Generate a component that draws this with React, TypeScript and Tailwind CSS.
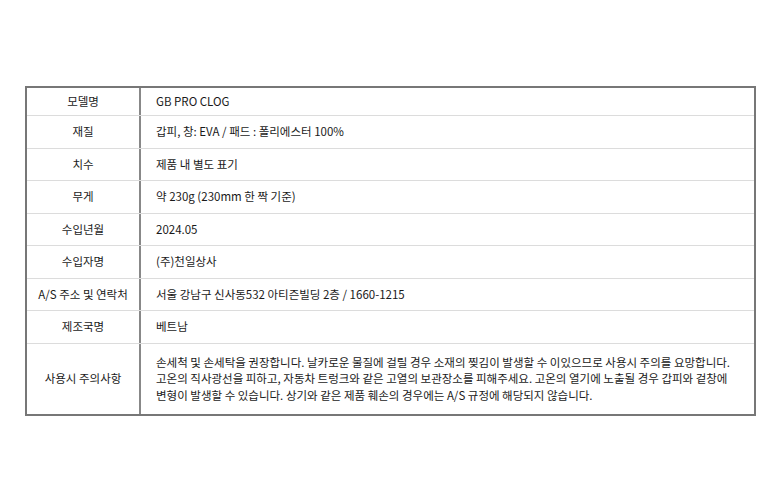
const rows: { label: string; value: string }[] = [
  { label: "모델명", value: "GB PRO CLOG" },
  { label: "재질", value: "갑피, 창: EVA / 패드 : 폴리에스터 100%" },
  { label: "치수", value: "제품 내 별도 표기" },
  { label: "무게", value: "약 230g (230mm 한 짝 기준)" },
  { label: "수입년월", value: "2024.05" },
  { label: "수입자명", value: "(주)천일상사" },
  { label: "A/S 주소 및 연락처", value: "서울 강남구 신사동532 아티즌빌딩 2층 / 1660-1215" },
  { label: "제조국명", value: "베트남" },
];

const notice = [
  "손세척 및 손세탁을 권장합니다. 날카로운 물질에 걸릴 경우 소재의 찢김이 발생할 수 이있으므로 사용시 주의를 요망합니다.",
  "고온의 직사광선을 피하고, 자동차 트렁크와 같은 고열의 보관장소를 피해주세요. 고온의 열기에 노출될 경우 갑피와 겉창에",
  "변형이 발생할 수 있습니다. 상기와 같은 제품 훼손의 경우에는 A/S 규정에 해당되지 않습니다.",
];

export default function App() {
  return (
    <div
      className="h-[502px] w-[780px] bg-white pl-[25px] pt-[86px] text-[11.5px] text-[#1a1a1a]"
      style={{ fontFamily: '"Noto Sans CJK KR", "Noto Sans", sans-serif' }}
    >
      <div className="w-[731px] border-2 border-[#777]">
        {rows.map((row, i) => (
          <div
            key={row.label}
            className={`flex border-b border-[#dcdcdc] ${i === 0 ? "h-[28px]" : "h-[32.5px]"}`}
          >
            <div className="flex w-[114px] shrink-0 items-center justify-center border-r-2 border-[#888]">
              {row.label}
            </div>
            <div className="flex items-center pl-[15px]">{row.value}</div>
          </div>
        ))}
        <div className="flex h-[70px]">
          <div className="flex w-[114px] shrink-0 items-center justify-center border-r-2 border-[#888]">
            사용시 주의사항
          </div>
          <div className="flex flex-col justify-center whitespace-nowrap pl-[15px] leading-[16.5px]">
            {notice.map((line) => (
              <p key={line}>{line}</p>
            ))}
          </div>
        </div>
      </div>
    </div>
  );
}
